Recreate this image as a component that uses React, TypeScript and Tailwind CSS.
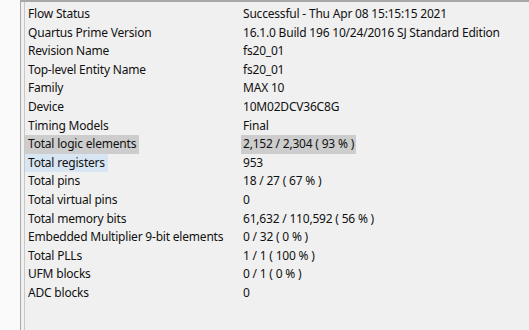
import React from "react";

type Row = { label: string; value: string; hl?: "sel" | "hover" };

const rows: Row[] = [
  { label: "Flow Status", value: "Successful - Thu Apr 08 15:15:15 2021" },
  { label: "Quartus Prime Version", value: "16.1.0 Build 196 10/24/2016 SJ Standard Edition" },
  { label: "Revision Name", value: "fs20_01" },
  { label: "Top-level Entity Name", value: "fs20_01" },
  { label: "Family", value: "MAX 10" },
  { label: "Device", value: "10M02DCV36C8G" },
  { label: "Timing Models", value: "Final" },
  { label: "Total logic elements", value: "2,152 / 2,304 ( 93 % )", hl: "sel" },
  { label: "Total registers", value: "953", hl: "hover" },
  { label: "Total pins", value: "18 / 27 ( 67 % )" },
  { label: "Total virtual pins", value: "0" },
  { label: "Total memory bits", value: "61,632 / 110,592 ( 56 % )" },
  { label: "Embedded Multiplier 9-bit elements", value: "0 / 32 ( 0 % )" },
  { label: "Total PLLs", value: "1 / 1 ( 100 % )" },
  { label: "UFM blocks", value: "0 / 1 ( 0 % )" },
  { label: "ADC blocks", value: "0" },
];

export default function App() {
  return (
    <div
      className="flex h-[330px] w-[529px] overflow-hidden bg-[#fafafa] text-[12px] tracking-[-0.2px] text-[#111111]"
      style={{ fontFamily: '"Noto Sans", "Open Sans", sans-serif' }}
    >
      <div className="w-[20px] shrink-0" />
      {/* summary table */}
      <div className="flex flex-1 border-l border-t-2 border-[#a8a8a8] bg-[#f0f0f0]">
        <div className="ml-[3px] flex flex-1 flex-col border-l border-[#c8c8c8] pt-[3px]">
          {rows.map((r) => (
            <div key={r.label} className="flex h-[18.6px] items-center whitespace-nowrap">
              <div className="w-[216px] shrink-0">
                <span
                  className={
                    "inline-block px-[3px] leading-[18.6px] " +
                    (r.hl === "sel" ? "bg-[#cdcdcd]" : r.hl === "hover" ? "bg-[#d8e6f4]" : "")
                  }
                >
                  {r.label}
                </span>
              </div>
              <span
                className={
                  "inline-block px-[2px] leading-[18.6px] " + (r.hl === "sel" ? "bg-[#cdcdcd]" : "")
                }
              >
                {r.value}
              </span>
            </div>
          ))}
        </div>
      </div>
    </div>
  );
}
